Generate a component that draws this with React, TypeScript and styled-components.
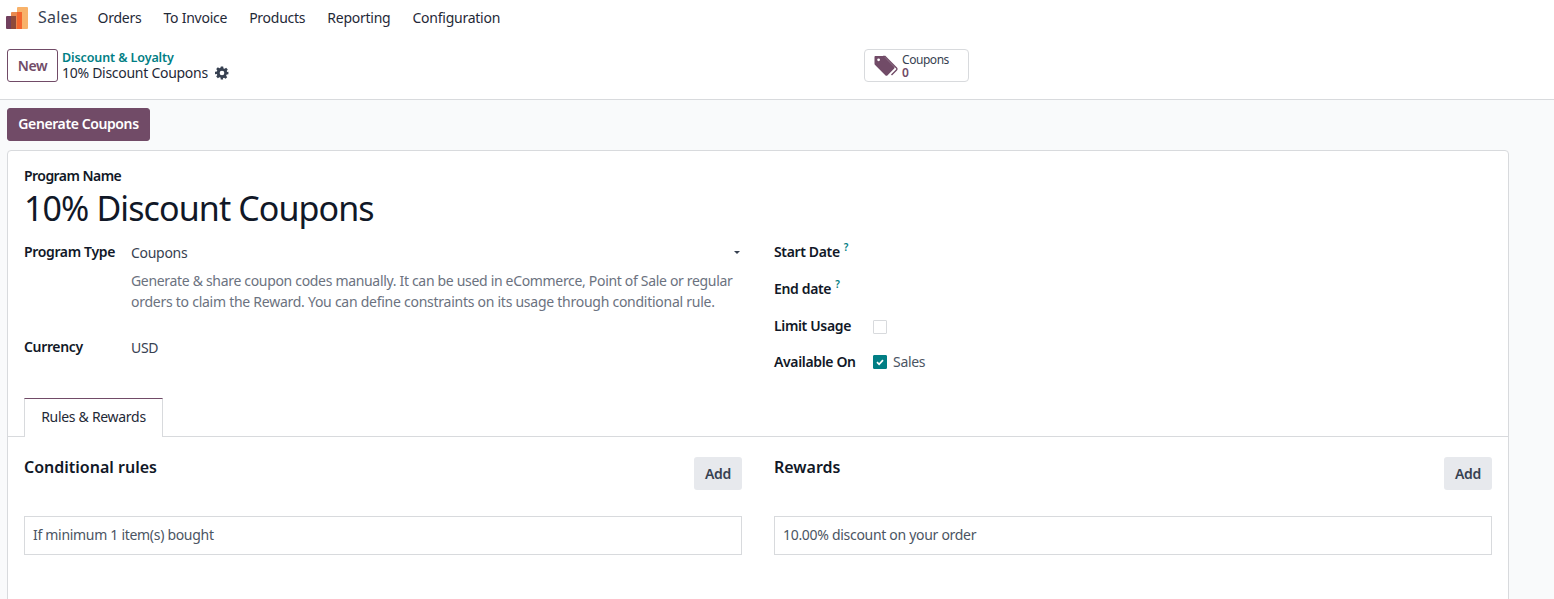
import React from 'react';
import styled, { createGlobalStyle } from 'styled-components';

const GlobalStyle = createGlobalStyle`
  html, body {
    margin: 0;
    padding: 0;
    background: #f9fafb;
    overflow: hidden;
  }
  body {
    font-family: 'Noto Sans', 'Open Sans', sans-serif;
    font-size: 14px;
    color: #374151;
  }
`;

const Page = styled.div`
  width: 1554px;
  height: 599px;
  overflow: hidden;
  display: flex;
  flex-direction: column;
`;

const NavBar = styled.nav`
  flex: none;
  height: 36px;
  box-sizing: border-box;
  padding: 0 0 2px 5px;
  background: #fff;
  display: flex;
  align-items: center;
`;

const AppName = styled.span`
  font-size: 16px;
  color: #374151;
  margin: 0 9px 0 9px;
  letter-spacing: 0.2px;
`;

const NavItem = styled.span`
  font-size: 14px;
  color: #1f2937;
  padding: 0 11px;
  letter-spacing: -0.25px;
`;

const ControlPanel = styled.div`
  flex: none;
  height: 50px;
  background: #fff;
  border-bottom: 1px solid #d8dadd;
  display: grid;
  grid-template-columns: 864px 105px;
  padding-top: 13px;
  box-sizing: content-box;
  align-items: start;
`;

const ControlLeft = styled.div`
  display: flex;
  padding-left: 7px;
`;

const NewButton = styled.button`
  width: 51px;
  height: 33px;
  padding: 0;
  background: #fff;
  border: 1px solid #714b67;
  border-radius: 3px;
  color: #714b67;
  font: 600 14px 'Noto Sans', sans-serif;
  letter-spacing: -0.3px;
`;

const Breadcrumbs = styled.div`
  margin-left: 4px;
  display: flex;
  flex-direction: column;
`;

const BreadcrumbLink = styled.a`
  color: #017e84;
  font-size: 12.5px;
  font-weight: 600;
  line-height: 16px;
  margin-top: 1px;
  letter-spacing: -0.1px;
`;

const CurrentRecord = styled.div`
  display: flex;
  align-items: center;
  gap: 7px;
  margin-top: -1px;
  font-size: 14px;
  line-height: 16px;
  color: #1f2937;
  letter-spacing: -0.28px;
`;

const StatButton = styled.button`
  height: 33px;
  padding: 0 0 0 9px;
  background: #fff;
  border: 1px solid #d8dadd;
  border-radius: 4px;
  display: flex;
  align-items: center;
  gap: 4px;
  font-family: inherit;
`;

const StatText = styled.span`
  display: flex;
  flex-direction: column;
  align-items: flex-start;
  font-size: 12px;
  line-height: 13px;
  color: #374151;
  letter-spacing: -0.45px;
`;

const StatValue = styled.span`
  color: #714b67;
  font-weight: 600;
`;

const ActionBar = styled.div`
  flex: none;
  padding: 8px 0 9px 7px;
  display: flex;
`;

const PrimaryButton = styled.button`
  width: 143px;
  height: 33px;
  padding: 0 0 2px;
  background: #714b67;
  border: 1px solid #714b67;
  border-radius: 3px;
  color: #fff;
  font: 600 14px 'Noto Sans', sans-serif;
  letter-spacing: -0.4px;
`;

const Sheet = styled.section`
  width: 1502px;
  height: 500px;
  flex: none;
  margin-left: 7px;
  background: #fff;
  border: 1px solid #d8dadd;
  border-radius: 4px 4px 0 0;
  box-sizing: border-box;
`;

const SheetHead = styled.div`
  padding: 16px 16px 0;
`;

const FieldLabel = styled.label`
  color: #111827;
  font-size: 14px;
  font-weight: 600;
  letter-spacing: -0.35px;
  line-height: 18px;
  display: block;
`;

const NameLabel = styled(FieldLabel)`
  letter-spacing: -0.55px;
`;

const ProgramTitle = styled.h1`
  margin: 1px 0 0;
  font-size: 34px;
  font-weight: 400;
  line-height: 44px;
  color: #111827;
  letter-spacing: -0.9px;
`;

const FormColumns = styled.div`
  display: grid;
  grid-template-columns: 718px 718px;
  column-gap: 32px;
  margin-top: 13px;
  height: 155px;
`;

const FieldRow = styled.div<{ $height: number; $labelWidth: number }>`
  display: grid;
  grid-template-columns: ${(p) => p.$labelWidth}px 1fr;
  height: ${(p) => p.$height}px;
  align-items: start;
`;

const Stack = styled.div`
  display: flex;
  flex-direction: column;
`;

const SelectValue = styled.div`
  display: flex;
  justify-content: space-between;
  align-items: center;
  height: 18px;
  padding-right: 3px;
  color: #374151;
  letter-spacing: -0.3px;
  font-size: 14px;
`;

const Caret = styled.span`
  width: 0;
  height: 0;
  border-left: 3.5px solid transparent;
  border-right: 3.5px solid transparent;
  border-top: 3.5px solid #374151;
`;

const HelpText = styled.p`
  margin: 9px 0 0;
  width: 612px;
  color: #6b7280;
  font-size: 14px;
  line-height: 21px;
  letter-spacing: -0.32px;
`;

const HelpSecondLine = styled.span`
  letter-spacing: -0.26px;
`;

const PlainValue = styled.span`
  color: #374151;
  letter-spacing: -0.3px;
  line-height: 20px;
`;

const Help = styled.sup`
  color: #017e84;
  font-size: 10px;
  font-weight: 600;
  margin-left: 4px;
  line-height: 0;
`;

const CheckBox = styled.span<{ $checked?: boolean }>`
  width: 14px;
  height: 14px;
  box-sizing: border-box;
  display: inline-flex;
  align-items: center;
  justify-content: center;
  margin-top: 1px;
  border: 1px solid ${(p) => (p.$checked ? '#017e84' : '#d8dadd')};
  background: ${(p) => (p.$checked ? '#017e84' : '#fff')};
  border-radius: 1px;
`;

const CheckLine = styled.div<{ $lift?: number }>`
  display: flex;
  align-items: center;
  gap: 6px;
  height: 18px;
  margin-top: ${(p) => -(p.$lift ?? 0)}px;
  color: #4b5563;
  letter-spacing: -0.3px;
`;

const TabStrip = styled.div`
  display: flex;
  padding-left: 16px;
  height: 38px;
  border-bottom: 1px solid #d8dadd;
`;

const Tab = styled.div`
  width: 139px;
  height: 39px;
  box-sizing: border-box;
  padding-bottom: 3px;
  background: #fff;
  border: 1px solid #d8dadd;
  border-top-color: #714b67;
  border-bottom: none;
  display: flex;
  align-items: center;
  justify-content: center;
  font-size: 14px;
  color: #1f2937;
  letter-spacing: -0.3px;
`;

const Panels = styled.div`
  display: grid;
  grid-template-columns: 718px 718px;
  column-gap: 32px;
  padding: 20px 16px 0;
`;

const PanelHead = styled.div`
  display: flex;
  justify-content: space-between;
  align-items: flex-start;
  height: 59px;
`;

const PanelTitle = styled.h3`
  margin: 0;
  font-size: 16px;
  font-weight: 600;
  line-height: 20px;
  color: #111827;
  letter-spacing: 0;
`;

const SecondaryButton = styled.button`
  width: 48px;
  height: 33px;
  padding: 0;
  border: none;
  border-radius: 3px;
  background: #e7e9ed;
  color: #374151;
  font: 600 14px 'Noto Sans', sans-serif;
  letter-spacing: -0.3px;
`;

const ListItem = styled.div`
  height: 39px;
  box-sizing: border-box;
  border: 1px solid #d8dadd;
  display: flex;
  align-items: center;
  padding: 0 0 2px 8px;
  font-size: 14px;
  color: #4b5563;
  letter-spacing: -0.3px;
`;

const AppLogo = () => (
  <svg width="24" height="24" viewBox="0 0 24 24">
    <rect x="12" y="2" width="11" height="22" rx="1" fill="#f8b26a" />
    <rect x="6" y="7" width="11" height="17" rx="1" fill="#e9894f" />
    <rect x="12" y="7" width="5" height="17" fill="#f4652f" />
    <rect x="1" y="11" width="10" height="13" rx="1" fill="#71405e" />
    <rect x="6" y="11" width="5" height="13" fill="#8f4a3a" />
  </svg>
);

const Gear = () => (
  <svg width="14" height="14" viewBox="0 0 24 24" fill="#374151">
    <path
      fillRule="evenodd"
      d="M10 1h4l.6 3.1 1.9.8 2.6-1.8 2.8 2.8-1.8 2.6.8 1.9L23 10v4l-3.1.6-.8 1.9 1.8 2.6-2.8 2.8-2.6-1.8-1.9.8L13.9 23h-4l-.5-3.1-1.9-.8-2.6 1.8-2.8-2.8 1.8-2.6-.8-1.9L0 14v-4l3.1-.5.8-1.9-1.8-2.6 2.8-2.8 2.6 1.8 1.9-.8L10 1zm2 7a4 4 0 1 0 0 8 4 4 0 0 0 0-8z"
    />
  </svg>
);

const Tags = () => (
  <svg width="24" height="21" viewBox="0 0 24 21">
    <path d="M9 1.5h2l11.5 11.5a1.4 1.4 0 0 1 0 2l-5 5" fill="none" stroke="#714b67" strokeWidth="1.4" />
    <path
      fillRule="evenodd"
      fill="#714b67"
      d="M1.5 1h7.2c.5 0 1 .2 1.4.6L20 11.5a1.6 1.6 0 0 1 0 2.3l-6.4 6.4a1.6 1.6 0 0 1-2.3 0L1.1 10.1A2 2 0 0 1 .5 8.7V2c0-.6.4-1 1-1zM4.6 3.4a1.4 1.4 0 1 0 0 2.8 1.4 1.4 0 0 0 0-2.8z"
    />
  </svg>
);

const Check = () => (
  <svg width="10" height="10" viewBox="0 0 10 10" fill="none">
    <path d="M2 5.2l2.1 2.1L8 3.1" stroke="#fff" strokeWidth="1.7" />
  </svg>
);

const navItems = ['Orders', 'To Invoice', 'Products', 'Reporting', 'Configuration'];

const App: React.FC = () => {
  return (
    <Page>
      <GlobalStyle />
      <NavBar>
        <AppLogo />
        <AppName>Sales</AppName>
        {navItems.map((item) => (
          <NavItem key={item}>{item}</NavItem>
        ))}
      </NavBar>
      <ControlPanel>
        <ControlLeft>
          <NewButton>New</NewButton>
          <Breadcrumbs>
            <BreadcrumbLink>Discount &amp; Loyalty</BreadcrumbLink>
            <CurrentRecord>
              10% Discount Coupons <Gear />
            </CurrentRecord>
          </Breadcrumbs>
        </ControlLeft>
        <StatButton>
          <Tags />
          <StatText>
            Coupons
            <StatValue>0</StatValue>
          </StatText>
        </StatButton>
      </ControlPanel>
      <ActionBar>
        <PrimaryButton>Generate Coupons</PrimaryButton>
      </ActionBar>
      <Sheet>
        <SheetHead>
          <NameLabel>Program Name</NameLabel>
          <ProgramTitle>10% Discount Coupons</ProgramTitle>
          <FormColumns>
            <Stack>
              <FieldRow $height={95} $labelWidth={107}>
                <FieldLabel>Program Type</FieldLabel>
                <div>
                  <SelectValue>
                    Coupons
                    <Caret />
                  </SelectValue>
                  <HelpText>
                    Generate &amp; share coupon codes manually. It can be used in eCommerce, Point of Sale or regular{' '}
                    <HelpSecondLine>
                      orders to claim the Reward. You can define constraints on its usage through conditional rule.
                    </HelpSecondLine>
                  </HelpText>
                </div>
              </FieldRow>
              <FieldRow $height={30} $labelWidth={107}>
                <FieldLabel>Currency</FieldLabel>
                <PlainValue>USD</PlainValue>
              </FieldRow>
            </Stack>
            <Stack>
              <FieldRow $height={37} $labelWidth={99}>
                <FieldLabel>
                  Start Date<Help>?</Help>
                </FieldLabel>
                <span />
              </FieldRow>
              <FieldRow $height={37} $labelWidth={99}>
                <FieldLabel>
                  End date<Help>?</Help>
                </FieldLabel>
                <span />
              </FieldRow>
              <FieldRow $height={36} $labelWidth={99}>
                <FieldLabel>Limit Usage</FieldLabel>
                <CheckLine>
                  <CheckBox />
                </CheckLine>
              </FieldRow>
              <FieldRow $height={30} $labelWidth={99}>
                <FieldLabel>Available On</FieldLabel>
                <CheckLine $lift={1}>
                  <CheckBox $checked>
                    <Check />
                  </CheckBox>
                  Sales
                </CheckLine>
              </FieldRow>
            </Stack>
          </FormColumns>
        </SheetHead>
        <TabStrip>
          <Tab>Rules &amp; Rewards</Tab>
        </TabStrip>
        <Panels>
          <div>
            <PanelHead>
              <PanelTitle>Conditional rules</PanelTitle>
              <SecondaryButton>Add</SecondaryButton>
            </PanelHead>
            <ListItem>If minimum 1 item(s) bought</ListItem>
          </div>
          <div>
            <PanelHead>
              <PanelTitle>Rewards</PanelTitle>
              <SecondaryButton>Add</SecondaryButton>
            </PanelHead>
            <ListItem>10.00% discount on your order</ListItem>
          </div>
        </Panels>
      </Sheet>
    </Page>
  );
};

export default App;
